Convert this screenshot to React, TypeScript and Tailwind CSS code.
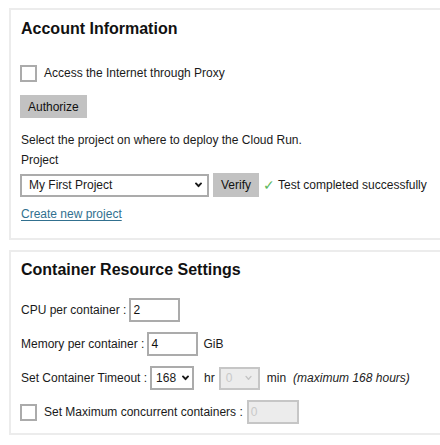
import React from 'react';

function Chevron({ light }: { light?: boolean }) {
  return (
    <svg width="7" height="6" viewBox="0 0 7 6" fill="none" className="shrink-0">
      <path
        d="M1 1.4 3.5 4.2 6 1.4"
        stroke={light ? '#c4c4c4' : '#1a1a1a'}
        strokeWidth={light ? 1.4 : 1.9}
        strokeLinecap="round"
        strokeLinejoin="round"
      />
    </svg>
  );
}

function Checkbox() {
  return <span className="w-[17px] h-[17px] border-2 border-[#ababab] bg-white shrink-0" />;
}

function GrayButton({ label, className = '' }: { label: string; className?: string }) {
  return (
    <button className={`bg-[#c2c2c2] px-2 text-[12px] text-[#111] leading-none ${className}`}>{label}</button>
  );
}

function TextBox({ value, disabled, className = '' }: { value: string; disabled?: boolean; className?: string }) {
  return (
    <div
      className={`h-[24px] border-2 flex items-center px-[2px] ${
        disabled ? 'bg-[#ececec] border-[#c6c6c6] text-[#c9c9c9]' : 'bg-white border-[#ababab] text-[#111]'
      } ${className}`}
    >
      {value}
    </div>
  );
}

export default function App() {
  return (
    <div className="w-[440px] h-[445px] overflow-hidden bg-white font-['Liberation_Sans',Arial,sans-serif] text-[12px] text-[#1a1a1a]">
      <div className="pt-2 pl-[9px] w-[480px] flex flex-col gap-[10px]">
        {/* Account */}
        <section className="border-2 border-[#ececec] pl-[10px] pt-[9px] pb-[16px]">
          <h2 className="text-[16px] leading-[20px] font-bold text-[#111]">Account Information</h2>
          <label className="mt-[25px] flex items-center gap-[7px] h-[18px] -ml-px">
            <Checkbox />
            <span>Access the Internet through Proxy</span>
          </label>
          <GrayButton label="Authorize" className="mt-[13px] h-[23px] -ml-px" />
          <p className="mt-[12px] leading-[20px]">Select the project on where to deploy the Cloud Run.</p>
          <p className="leading-[20px]">Project</p>
          <div className="mt-[3px] flex items-center -ml-px">
            <div className="w-[189px] h-[23px] border-2 border-[#ababab] flex items-center justify-between pl-[7px] pr-[5px]">
              <span>My First Project</span>
              <Chevron />
            </div>
            <GrayButton label="Verify" className="ml-[4px] h-[24px]" />
            <span className="ml-[4px] text-[14px] leading-none text-[#5cb85c]">✓</span>
            <span className="ml-[3px]">Test completed successfully</span>
          </div>
          <a href="#" className="mt-[9px] block leading-[16px] text-[#31708f] underline underline-offset-2 w-max">
            Create new project
          </a>
        </section>

        {/* Container resources */}
        <section className="border-2 border-[#ececec] pl-[10px] pt-[8px] pb-[9px]">
          <h2 className="text-[16px] leading-[20px] font-bold text-[#111]">Container Resource Settings</h2>
          <div className="mt-[18px] flex flex-col gap-[10px]">
            <div className="flex items-center gap-[3px]">
              <span>CPU per container :</span>
              <TextBox value="2" className="w-[51px]" />
            </div>
            <div className="flex items-center gap-[3px]">
              <span>Memory per container :</span>
              <TextBox value="4" className="w-[51px]" />
              <span className="ml-[2px]">GiB</span>
            </div>
            <div className="flex items-center">
              <span>Set Container Timeout :</span>
              <div className="ml-[3px] w-[44px] h-[24px] border-2 border-[#ababab] flex items-center justify-between pl-[4px] pr-[3px]">
                <span>168</span>
                <Chevron />
              </div>
              <span className="ml-[10px]">hr</span>
              <div className="ml-[4px] w-[41px] h-[23px] border-2 border-[#c6c6c6] bg-[#ececec] flex items-center justify-between pl-[5px] pr-[6px] text-[#c9c9c9]">
                <span>0</span>
                <Chevron light />
              </div>
              <span className="ml-[7px]">min</span>
              <span className="ml-[7px] italic text-[#222]">(maximum 168 hours)</span>
            </div>
            <label className="flex items-center -ml-px">
              <Checkbox />
              <span className="ml-[7px]">Set Maximum concurrent containers :</span>
              <TextBox value="0" disabled className="ml-[4px] w-[52px] h-[23px]" />
            </label>
          </div>
        </section>
      </div>
    </div>
  );
}
